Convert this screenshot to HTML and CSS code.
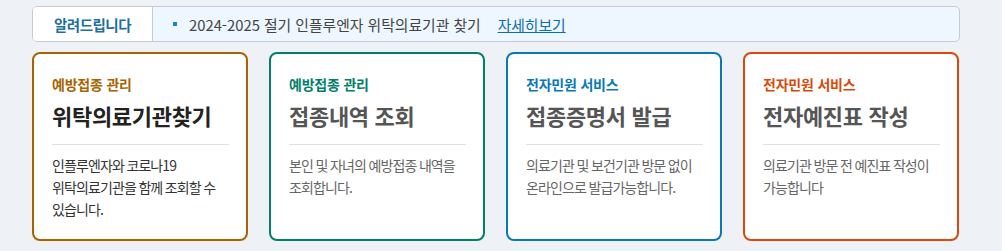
FILE: index.html
```html
<!DOCTYPE html>
<html lang="ko">
<head>
    <meta charset="UTF-8">
    <meta name="viewport" content="width=device-width, initial-scale=1.0">
    <title>예방접종도우미</title>
    <link rel="stylesheet" href="styles.css">
</head>
<body>
    <div class="wrap">
        <div class="notice">
            <strong class="notice-label">알려드립니다</strong>
            <div class="notice-body">
                <span class="notice-dot"></span>
                <span class="notice-text">2024-2025 절기 인플루엔자 위탁의료기관 찾기</span>
                <a class="notice-more" href="#">자세히보기</a>
            </div>
        </div>

        <ul class="cards">
            <li class="card card-brown active">
                <p class="card-cat">예방접종 관리</p>
                <h2 class="card-title">위탁의료기관찾기</h2>
                <p class="card-desc">인플루엔자와 코로나19 위탁의료기관을 함께 조회할 수 있습니다.</p>
            </li>
            <li class="card card-green">
                <p class="card-cat">예방접종 관리</p>
                <h2 class="card-title">접종내역 조회</h2>
                <p class="card-desc">본인 및 자녀의 예방접종 내역을 조회합니다.</p>
            </li>
            <li class="card card-blue">
                <p class="card-cat">전자민원 서비스</p>
                <h2 class="card-title">접종증명서 발급</h2>
                <p class="card-desc">의료기관 및 보건기관 방문 없이 온라인으로 발급가능합니다.</p>
            </li>
            <li class="card card-red">
                <p class="card-cat">전자민원 서비스</p>
                <h2 class="card-title">전자예진표 작성</h2>
                <p class="card-desc">의료기관 방문 전 예진표 작성이 가능합니다</p>
            </li>
        </ul>
    </div>
</body>
</html>
```

FILE: styles.css
```css
body {
    margin: 0;
    background: #eef2f6;
    font-family: "Noto Sans CJK KR", "Noto Sans", sans-serif;
    color: #333;
}
.wrap { width: 928px; margin: 0 0 0 32px; padding-top: 6px; }

/* notice bar */
.notice {
    display: flex;
    height: 34px;
    border: 1px solid #c6ccd4;
    border-radius: 5px;
    background: #eef6ff;
    overflow: hidden;
}
.notice-label {
    width: 119px;
    display: flex;
    align-items: center;
    justify-content: center;
    background: #fff;
    border-right: 1px solid #c6ccd4;
    color: #1b6fa3;
    font-size: 14.5px;
    letter-spacing: -0.5px;
}
.notice-body { display: flex; align-items: center; padding-left: 20px; font-size: 14.8px; }
.notice-dot { width: 4px; height: 4px; background: #1a86c8; margin-right: 12px; }
.notice-text { color: #444; }
.notice-more { margin-left: 17px; color: #0a6fb0; text-decoration: underline; }

/* cards */
.cards {
    list-style: none;
    margin: 10px 0 0;
    padding: 0;
    display: grid;
    grid-template-columns: repeat(4, 216px);
    column-gap: 21px;
}
.card {
    height: 189px;
    box-sizing: border-box;
    padding: 20px 17px 0 18px;
    background: #fff;
    border: 2px solid #999;
    border-radius: 8px;
    word-break: keep-all;
}
.card-cat { margin: 0; font-size: 14px; font-weight: bold; letter-spacing: -0.2px; line-height: 20px; }
.card-title {
    margin: 6px 0 0;
    padding-bottom: 14px;
    border-bottom: 1px solid #dde0e4;
    font-size: 22px;
    letter-spacing: -0.3px;
    line-height: 30px;
    color: #555;
}
.card-desc {
    margin: 9px 0 0;
    font-size: 14px;
    line-height: 22px;
    letter-spacing: -0.9px;
    word-spacing: -0.5px;
    color: #666;
}
.active .card-title { color: #222; }
.active .card-desc { color: #333; }

.card-brown { border-color: #a86400; }
.card-brown .card-cat { color: #a86400; }
.card-green { border-color: #00806b; }
.card-green .card-cat { color: #00806b; }
.card-blue { border-color: #0a78b4; }
.card-blue .card-cat { color: #0a78b4; }
.card-red { border-color: #d94a0a; }
.card-red .card-cat { color: #d94a0a; }
```
